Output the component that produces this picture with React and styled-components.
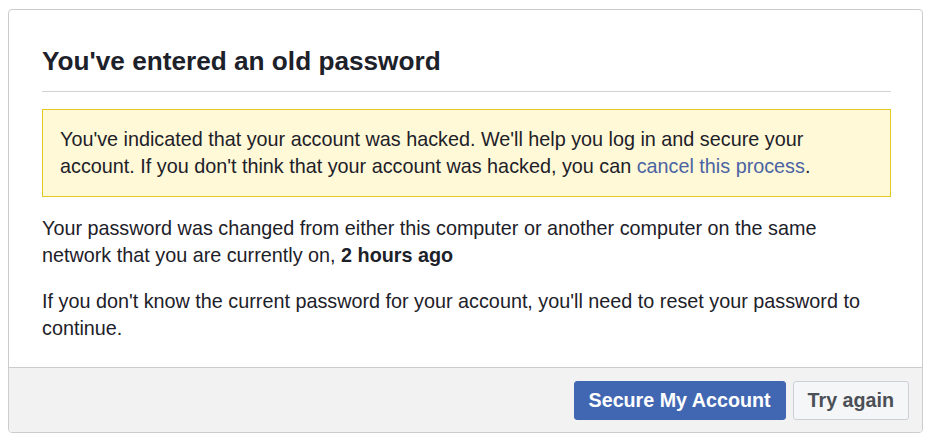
import React from "react";
import styled, { createGlobalStyle } from "styled-components";

const GlobalStyle = createGlobalStyle`
  body {
    margin: 0;
    background: #fff;
    font-family: "Liberation Sans", Arial, sans-serif;
    color: #1d2129;
  }
`;

const App = () => {
  return (
    <>
      <GlobalStyle />
      <Dialog>
        <Body>
          <Title>You've entered an old password</Title>
          <Notice>
            You've indicated that your account was hacked. We'll help you log in
            and secure your account. If you don't think that your account was
            hacked, you can <Link href="#">cancel this process</Link>.
          </Notice>
          <Paragraph>
            Your password was changed from either this computer or another
            computer on the same network that you are currently on,{" "}
            <strong>2 hours ago</strong>
          </Paragraph>
          <Paragraph>
            If you don't know the current password for your account, you'll need
            to reset your password to continue.
          </Paragraph>
        </Body>
        <Footer>
          <Button primary>Secure My Account</Button>
          <Button>Try again</Button>
        </Footer>
      </Dialog>
    </>
  );
};

export default App;

const Dialog = styled.div`
  margin: 9px 9px 0 8px;
  border: 1px solid #cccccc;
  border-radius: 4px;
  overflow: hidden;
  background: #fff;
`;

const Body = styled.div`
  padding: 35px 31px 25px 33px;
`;

const Title = styled.h2`
  margin: 0;
  padding-bottom: 14px;
  border-bottom: 1px solid #d3d3d3;
  font-size: 26.2px;
  line-height: 32px;
  font-weight: bold;
  color: #1d2129;
`;

const Notice = styled.div`
  margin-top: 17px;
  padding: 16px 17px;
  background: #fff9d7;
  border: 1px solid #e2c822;
  font-size: 19.8px;
  line-height: 27px;
`;

const Link = styled.a`
  color: #4b63a4;
  text-decoration: none;
`;

const Paragraph = styled.p`
  margin: 18px 0 0;
  font-size: 19.8px;
  line-height: 27px;

  & + & {
    margin-top: 19px;
  }
`;

const Footer = styled.div`
  display: flex;
  justify-content: flex-end;
  gap: 7px;
  padding: 13px 13px 12px;
  background: #f2f2f2;
  border-top: 1px solid #cccccc;
`;

const Button = styled.button`
  box-sizing: border-box;
  height: 39px;
  padding: 0 14px;
  border-radius: 3px;
  border: 1px solid ${(props) => (props.primary ? "#4267b2" : "#ccd0d5")};
  background: ${(props) => (props.primary ? "#4267b2" : "#f5f6f7")};
  color: ${(props) => (props.primary ? "#fff" : "#4b4f56")};
  font-family: "Liberation Sans", Arial, sans-serif;
  font-size: 19.7px;
  font-weight: bold;
  cursor: pointer;
`;
